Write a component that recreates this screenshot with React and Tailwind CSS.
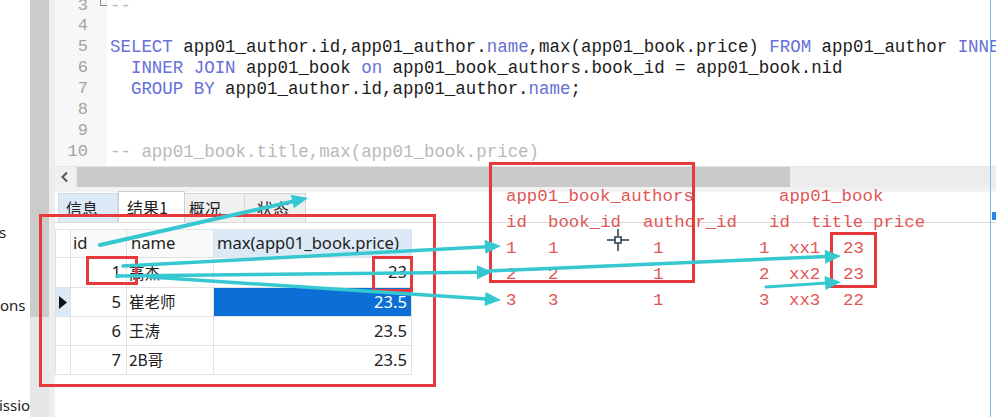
import React from "react";

const MONO = { fontFamily: '"Liberation Mono", "DejaVu Sans Mono", monospace' };

const codeLines = [
  { n: 3, fold: true, parts: [["--", "c"]] },
  { n: 4, parts: [] },
  {
    n: 5,
    parts: [
      ["SELECT", "k"],
      [" app01_author.id,app01_author.", ""],
      ["name", "k"],
      [",max(app01_book.price) ", ""],
      ["FROM", "k"],
      [" app01_author ", ""],
      ["INNER JOIN", "k"],
      [" app01_book_authors ", ""],
      ["on", "k"],
      [" app01_author.id = app01_book_authors.author_id", ""],
    ],
  },
  {
    n: 6,
    parts: [
      ["  ", ""],
      ["INNER JOIN", "k"],
      [" app01_book ", ""],
      ["on", "k"],
      [" app01_book_authors.book_id = app01_book.nid", ""],
    ],
  },
  {
    n: 7,
    parts: [
      ["  ", ""],
      ["GROUP BY", "k"],
      [" app01_author.id,app01_author.", ""],
      ["name", "k"],
      [";", ""],
    ],
  },
  { n: 8, parts: [] },
  { n: 9, parts: [] },
  { n: 10, parts: [["-- app01_book.title,max(app01_book.price)", "c"]] },
];

function partClass(t) {
  if (t === "k") return "text-[#6670d8]";
  if (t === "c") return "text-[#b9b9b9]";
  return "text-[#1c1c1c]";
}

function Arrow({ x1, y1, x2, y2, w = 3.5 }) {
  const dx = x2 - x1;
  const dy = y2 - y1;
  const L = Math.hypot(dx, dy);
  const ux = dx / L;
  const uy = dy / L;
  const h = 16;
  const hw = 7;
  const bx = x2 - ux * h;
  const by = y2 - uy * h;
  const px = -uy;
  const py = ux;
  const pts = `${x2},${y2} ${bx + px * hw},${by + py * hw} ${bx - px * hw},${by - py * hw}`;
  return (
    <g>
      <line x1={x1} y1={y1} x2={bx + ux * 2} y2={by + uy * 2} stroke="#36c8d1" strokeWidth={w} strokeLinecap="round" />
      <polygon points={pts} fill="#36c8d1" />
    </g>
  );
}

const rows = [
  { id: "1", name: "高杰", price: "23" },
  { id: "5", name: "崔老师", price: "23.5", sel: true },
  { id: "6", name: "王涛", price: "23.5" },
  { id: "7", name: "2B哥", price: "23.5" },
];

function RedBox({ className }) {
  return <div className={"absolute border-[3px] border-[#e5393b] pointer-events-none " + className} />;
}

export default function App() {
  return (
    <div className="relative w-[996px] h-[417px] overflow-hidden bg-white flex">
      {/* left sidebar fragment */}
      <div
        className="w-[30px] shrink-0 overflow-hidden bg-white text-[15px] text-[#222] whitespace-nowrap flex flex-col"
        style={{ fontFamily: '"Noto Sans", "Open Sans", sans-serif' }}
      >
        <div className="mt-[221px] h-[22px] leading-[22px] -ml-[1px]">s</div>
        <div className="mt-[51px] h-[22px] leading-[22px]">ons</div>
        <div className="mt-[78px] h-[22px] leading-[22px] -ml-[1px]">issio</div>
      </div>

      {/* vertical scroll strip */}
      <div className="w-[19px] shrink-0 flex flex-col">
        <div className="h-[317px] bg-[#cbcbcb]" />
        <div className="flex-1 bg-[#e7e7e7]" />
      </div>
      <div className="w-[6px] shrink-0 bg-[#ededed]" />

      {/* main area */}
      <div className="flex-1 min-w-0 flex flex-col">
        {/* editor */}
        <div className="h-[166px] flex overflow-hidden text-[17.45px]" style={MONO}>
          <div className="w-[52px] shrink-0 bg-[#f7f7f7] flex flex-col -mt-[4.4px]">
            {codeLines.map((l) => (
              <div key={l.n} className="h-[20.86px] leading-[20.86px] flex">
                <div className="w-[33px] text-right text-[#a3a3a3] text-[17px]">{l.n}</div>
                <div className="w-[19px] relative">
                  {l.fold && (
                    <div className="ml-[12px] -mt-[2px] w-[7px] h-[12px] border-l border-b border-[#8a8a8a]" />
                  )}
                </div>
              </div>
            ))}
          </div>
          <div className="flex-1 min-w-0 bg-white flex flex-col -mt-[4.4px] pl-[3px]">
            {codeLines.map((l) => (
              <div key={l.n} className="h-[20.86px] leading-[20.86px] whitespace-pre">
                {(l.parts || []).map((p, i) => (
                  <span key={i} className={partClass(p[1])}>
                    {p[0]}
                  </span>
                ))}
              </div>
            ))}
          </div>
        </div>

        {/* horizontal scrollbar */}
        <div className="h-[1px] bg-[#e6e6e6]" />
        <div className="h-[20px] flex bg-[#f0f0f0]">
          <div className="w-[20px] flex items-center justify-center">
            <svg width="10" height="12" viewBox="0 0 10 12">
              <path d="M7 1.5 L2.5 6 L7 10.5" fill="none" stroke="#555" strokeWidth="2" />
            </svg>
          </div>
          <div className="flex-1 flex pl-[2px] bg-[#ececec]">
            <div className="w-[713px] bg-[#cacaca]" />
          </div>
        </div>
        <div className="h-[5px] bg-[#f2f2f2]" />

        {/* tabs */}
        <div
          className="h-[31px] flex items-end pl-[3px] border-b border-[#dadada] text-[16px] text-[#222]"
          style={{ fontFamily: '"Noto Sans CJK SC", "Noto Sans", sans-serif' }}
        >
          <div className="w-[60px] h-[29px] flex items-center pl-[7px] bg-[#dce9f7] border border-b-0 border-[#d0dbe6]">
            信息
          </div>
          <div className="w-[67px] h-[31px] flex items-center pl-[8px] bg-white border border-b-0 border-[#cfcfcf]">
            结果1
          </div>
          <div className="w-[60px] h-[29px] flex items-center pl-[4px] bg-[#f0f0f0] border border-b-0 border-l-0 border-[#d6d6d6]">
            概况
          </div>
          <div className="w-[61px] h-[29px] flex items-center pl-[12px] bg-[#efefef] border border-b-0 border-l-0 border-[#d6d6d6]">
            状态
          </div>
        </div>

        {/* result grid */}
        <div
          className="mt-[6px] grid grid-cols-[15px_56px_87px_198px] w-[356px] text-[16.6px] text-[#222] border-t border-l border-[#e2e2e2]"
          style={{ fontFamily: '"Noto Sans", "Noto Sans CJK SC", sans-serif' }}
        >
          <div className="h-[28px] border-r border-b border-[#e2e2e2] bg-white" />
          <div className="h-[28px] border-r border-b border-[#e2e2e2] bg-[#fafafa] flex items-center pl-[2px]">id</div>
          <div className="h-[28px] border-r border-b border-[#e2e2e2] bg-[#fafafa] flex items-center pl-[4px]">name</div>
          <div className="h-[28px] border-r border-b border-[#e2e2e2] bg-[#dce9f7] flex items-center pl-[3px]">
            max(app01_book.price)
          </div>
          {rows.map((r, i) => {
            const h = i === 0 ? "h-[30px]" : "h-[29px]";
            return (
              <React.Fragment key={r.id}>
                <div
                  className={
                    h +
                    " border-r border-b border-[#e2e2e2] flex items-center justify-center " +
                    (r.sel ? "bg-[#dce9f7]" : "bg-white")
                  }
                >
                  {r.sel && (
                    <svg width="8" height="13" viewBox="0 0 8 13">
                      <path d="M0 0 L8 6.5 L0 13 Z" fill="#111" />
                    </svg>
                  )}
                </div>
                <div className={h + " border-r border-b border-[#e2e2e2] flex items-center justify-end pr-[5px]"}>{r.id}</div>
                <div className={h + " border-r border-b border-[#e2e2e2] flex items-center pl-[2px]"}>
                  <span className="text-[15.5px]" style={{ fontFamily: '"Noto Sans CJK SC", "Noto Sans", sans-serif' }}>
                    {r.name}
                  </span>
                </div>
                <div
                  className={
                    h +
                    " border-r border-b border-[#e2e2e2] flex items-center justify-end pr-[4px] " +
                    (r.sel ? "bg-[#0b6fd6] text-white" : "bg-white")
                  }
                >
                  {r.price}
                </div>
              </React.Fragment>
            );
          })}
        </div>
      </div>

      {/* annotation text */}
      <div className="absolute left-[506px] top-[184px] text-[17.4px] text-[#e05656] whitespace-pre leading-[26px]" style={MONO}>
        <div className="h-[26px] flex">
          <span className="w-[273px]">app01_book_authors</span>
          <span>app01_book</span>
        </div>
        <div className="h-[26px] flex">
          <span className="w-[42px]">id</span>
          <span className="w-[95px]">book_id</span>
          <span className="w-[126px]">author_id</span>
          <span className="w-[42px]">id</span>
          <span className="w-[62px]">title</span>
          <span>price</span>
        </div>
        {[
          ["1", "1", "1", "1", "xx1", "23"],
          ["2", "2", "1", "2", "xx2", "23"],
          ["3", "3", "1", "3", "xx3", "22"],
        ].map((r, i) => (
          <div key={i} className="h-[26px] flex">
            <span className="w-[42px]">{r[0]}</span>
            <span className="w-[105px]">{r[1]}</span>
            <span className="w-[106px]">{r[2]}</span>
            <span className="w-[30px]">{r[3]}</span>
            <span className="w-[54px]">{r[4]}</span>
            <span>{r[5]}</span>
          </div>
        ))}
      </div>

      {/* red annotation boxes */}
      <RedBox className="left-[39px] top-[214px] w-[397px] h-[173px]" />
      <RedBox className="left-[86px] top-[256px] w-[52px] h-[29px]" />
      <RedBox className="left-[372px] top-[256px] w-[41px] h-[36px]" />
      <RedBox className="left-[489px] top-[162px] w-[206px] h-[121px]" />
      <RedBox className="left-[830px] top-[232px] w-[47px] h-[56px]" />

      {/* right edge */}
      <div className="absolute left-[990px] top-0 w-[1px] h-[417px] bg-[#8bb8e4]" />
      <div className="absolute left-[992px] top-[212px] w-[4px] h-[8px] bg-[#2a88e0]" />

      {/* cyan arrows + cursor */}
      <svg className="absolute left-0 top-0 pointer-events-none" width="996" height="417" viewBox="0 0 996 417">
        <Arrow x1={100} y1={245} x2={308} y2={198} w={4} />
        <Arrow x1={123} y1={266} x2={501} y2={246} />
        <Arrow x1={117} y1={276} x2={493} y2={272} />
        <Arrow x1={150} y1={277} x2={501} y2={300} />
        <Arrow x1={488} y1={271} x2={841} y2={256} />
        <Arrow x1={766} y1={287} x2={841} y2={282} w={3} />
        <g stroke="#2c4656" strokeWidth="1.6" fill="none">
          <line x1="618" y1="229" x2="618" y2="236" />
          <line x1="618" y1="243" x2="618" y2="251" />
          <line x1="607" y1="240" x2="615" y2="240" />
          <line x1="621" y1="240" x2="629" y2="240" />
          <rect x="615" y="237" width="6" height="6" fill="#fff" />
        </g>
      </svg>
    </div>
  );
}
